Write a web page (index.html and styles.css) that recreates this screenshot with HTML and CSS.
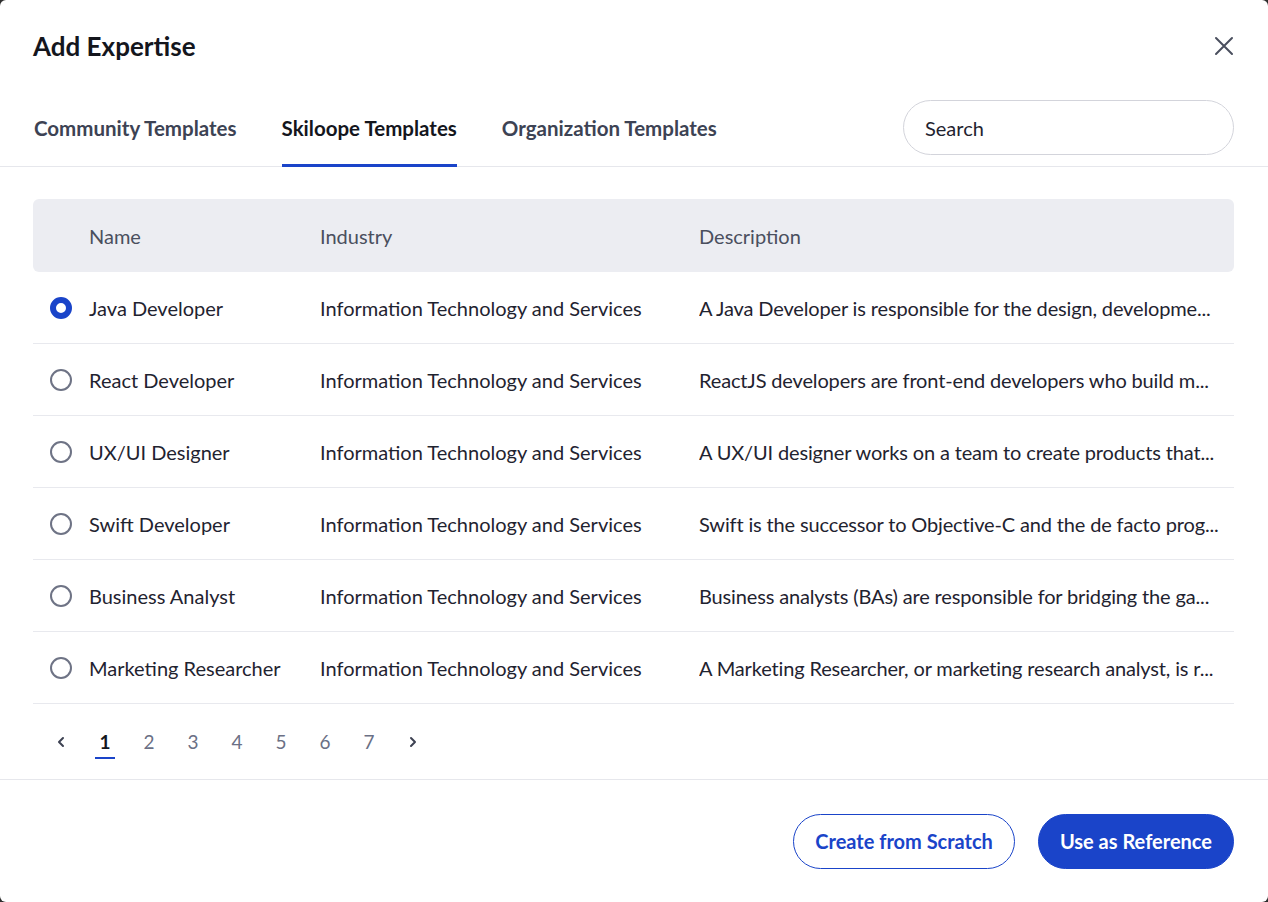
FILE: index.html
```html
<!DOCTYPE html>
<html lang="en">
<head>
    <meta charset="UTF-8">
    <meta name="viewport" content="width=device-width, initial-scale=1.0">
    <title>Add Expertise</title>
    <link rel="stylesheet" href="styles.css">
</head>
<body>
    <div class="modal">
        <div class="modal-header">
            <h1>Add Expertise</h1>
            <button class="close-btn" aria-label="Close">
                <svg width="22" height="22" viewBox="0 0 22 22"><path d="M3 3 L19 19 M19 3 L3 19" stroke="#4a4f5e" stroke-width="2" stroke-linecap="round" fill="none"/></svg>
            </button>
        </div>

        <div class="tab-row">
            <a class="tab">Community Templates</a>
            <a class="tab active">Skiloope Templates</a>
            <a class="tab">Organization Templates</a>
            <input class="search" type="text" placeholder="Search">
        </div>

        <div class="table-wrap">
            <div class="table-head">
                <span></span>
                <span>Name</span>
                <span>Industry</span>
                <span>Description</span>
            </div>

            <div class="table-row">
                <span class="radio checked"></span>
                <span>Java Developer</span>
                <span>Information Technology and Services</span>
                <span class="desc">A Java Developer is responsible for the design, developme...</span>
            </div>
            <div class="table-row">
                <span class="radio"></span>
                <span>React Developer</span>
                <span>Information Technology and Services</span>
                <span class="desc">ReactJS developers are front-end developers who build m...</span>
            </div>
            <div class="table-row">
                <span class="radio"></span>
                <span>UX/UI Designer</span>
                <span>Information Technology and Services</span>
                <span class="desc">A UX/UI designer works on a team to create products that...</span>
            </div>
            <div class="table-row">
                <span class="radio"></span>
                <span>Swift Developer</span>
                <span>Information Technology and Services</span>
                <span class="desc">Swift is the successor to Objective-C and the de facto prog...</span>
            </div>
            <div class="table-row">
                <span class="radio"></span>
                <span>Business Analyst</span>
                <span>Information Technology and Services</span>
                <span class="desc">Business analysts (BAs) are responsible for bridging the ga...</span>
            </div>
            <div class="table-row">
                <span class="radio"></span>
                <span>Marketing Researcher</span>
                <span>Information Technology and Services</span>
                <span class="desc">A Marketing Researcher, or marketing research analyst, is r...</span>
            </div>
        </div>

        <div class="pagination">
            <span class="page arrow">
                <svg width="10" height="12" viewBox="0 0 10 12"><path d="M7 2 L3 6 L7 10" stroke="#3d4252" stroke-width="2" fill="none" stroke-linecap="round" stroke-linejoin="round"/></svg>
            </span>
            <span class="page current">1</span>
            <span class="page">2</span>
            <span class="page">3</span>
            <span class="page">4</span>
            <span class="page">5</span>
            <span class="page">6</span>
            <span class="page">7</span>
            <span class="page arrow">
                <svg width="10" height="12" viewBox="0 0 10 12"><path d="M3 2 L7 6 L3 10" stroke="#3d4252" stroke-width="2" fill="none" stroke-linecap="round" stroke-linejoin="round"/></svg>
            </span>
        </div>

        <div class="modal-footer">
            <button class="btn btn-outline">Create from Scratch</button>
            <button class="btn btn-primary">Use as Reference</button>
        </div>
    </div>
</body>
</html>
```

FILE: styles.css
```css
body {
    margin: 0;
    padding: 0;
    background-color: #2e2e2e;
    font-family: 'Lato', 'Noto Sans', sans-serif;
    color: #1f2330;
}

.modal {
    width: 1268px;
    height: 902px;
    background: #fff;
    border-radius: 6px;
    overflow: hidden;
    display: flex;
    flex-direction: column;
}

.modal-header {
    display: flex;
    align-items: center;
    justify-content: space-between;
    padding: 31px 34px 0 33px;
    height: 30px;
}

.modal-header h1 {
    margin: 0;
    font-size: 26px;
    font-weight: 700;
    line-height: 30px;
    color: #14161d;
}

.close-btn {
    background: none;
    border: 0;
    padding: 0;
    margin-right: -1px;
    cursor: pointer;
    display: flex;
}

.tab-row {
    display: flex;
    align-items: flex-end;
    gap: 45px;
    margin-top: 39px;
    padding: 0 34px 0 34px;
    border-bottom: 1px solid #e6e7ec;
}

.tab {
    font-size: 20.5px;
    font-weight: 700;
    line-height: 24px;
    color: #3d4354;
    padding-bottom: 24px;
    border-bottom: 3px solid transparent;
    margin-bottom: -1px;
    cursor: pointer;
}

.tab.active {
    color: #14161d;
    border-bottom-color: #1a44c9;
}

.search {
    margin-left: auto;
    margin-bottom: 11px;
    width: 331px;
    height: 55px;
    box-sizing: border-box;
    border: 1px solid #d3d4db;
    border-radius: 28px;
    padding: 0 21px;
    font-family: 'Lato', 'Noto Sans', sans-serif;
    font-size: 20px;
    outline: none;
}

.search::placeholder {
    color: #1f2330;
}

.table-wrap {
    padding: 32px 34px 0 33px;
}

.table-head,
.table-row {
    display: grid;
    grid-template-columns: 56px 231px 379px 1fr;
    align-items: center;
    font-size: 20px;
    padding-right: 4px;
}

.table-head {
    height: 73px;
    background: #ecedf2;
    border-radius: 6px;
    color: #4a4f5e;
}

.table-row {
    height: 71px;
    border-bottom: 1px solid #e8e9ee;
    color: #1f2330;
}

.table-row span,
.table-head span {
    white-space: nowrap;
}

.desc {
    overflow: hidden;
    letter-spacing: -0.15px;
}

.radio {
    width: 22px;
    height: 22px;
    box-sizing: border-box;
    border: 2px solid #6e7385;
    border-radius: 50%;
    margin-left: 17px;
}

.radio.checked {
    border: 6px solid #1a44c9;
}

.pagination {
    display: flex;
    align-items: center;
    height: 75px;
    padding-left: 39px;
    border-bottom: 1px solid #e6e7ec;
}

.page {
    width: 44px;
    text-align: center;
    font-size: 19px;
    color: #6b7085;
    position: relative;
    display: flex;
    justify-content: center;
    cursor: pointer;
}

.page.current {
    color: #14161d;
    font-weight: 700;
}

.page.current::after {
    content: '';
    position: absolute;
    left: 12px;
    right: 12px;
    bottom: -6px;
    height: 2px;
    background: #1a44c9;
}

.modal-footer {
    flex: 1;
    display: flex;
    align-items: center;
    justify-content: flex-end;
    gap: 23px;
    padding: 0 34px 0 0;
}

.btn {
    height: 55px;
    border-radius: 28px;
    padding: 0 21px;
    font-family: 'Lato', 'Noto Sans', sans-serif;
    font-size: 20px;
    font-weight: 700;
    cursor: pointer;
}

.btn-outline {
    background: #fff;
    color: #1a44c9;
    border: 1.5px solid #1a44c9;
}

.btn-primary {
    background: #1a44c9;
    color: #fff;
    border: 1.5px solid #1a44c9;
}
```
